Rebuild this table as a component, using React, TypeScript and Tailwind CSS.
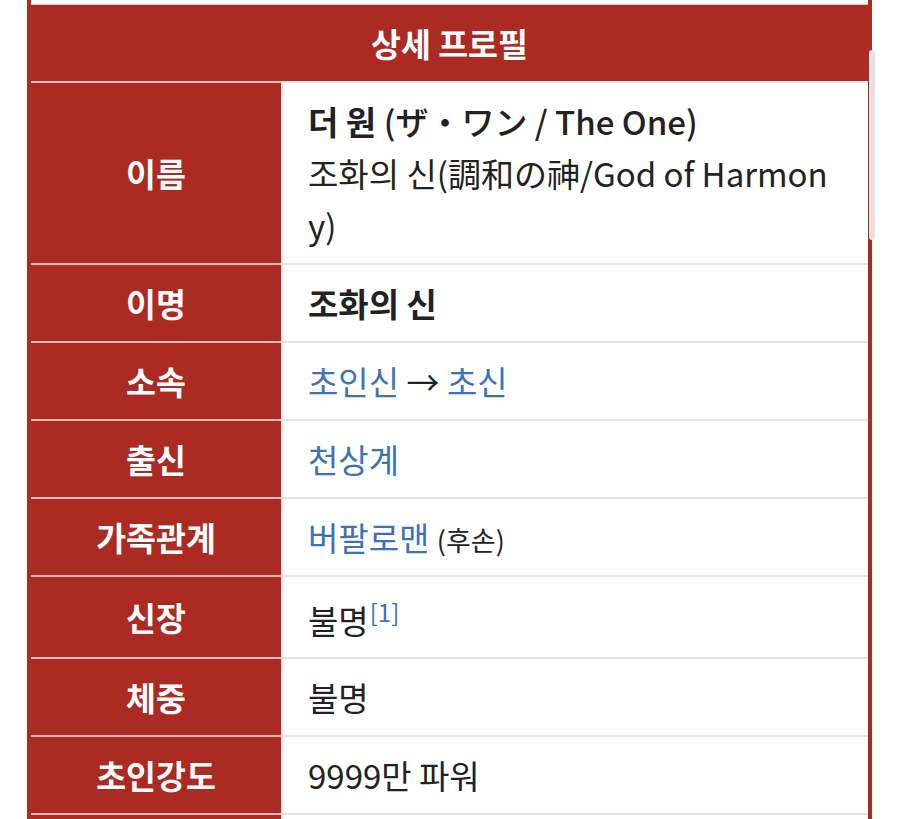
import React from 'react';

interface Row {
  label: string;
  value: React.ReactNode;
  tall?: boolean;
}

const Link = ({ children }: { children: React.ReactNode }) => (
  <span className="text-[#3b72b8]">{children}</span>
);

const ROWS: Row[] = [
  {
    label: '이름',
    value: (
      <>
        <span className="font-bold">더 원</span>
        <span className="font-medium"> (ザ・ワン / The One)</span>
        <br />
        조화의 신(調和の神/God of Harmony)
      </>
    ),
  },
  { label: '이명', value: <span className="font-bold">조화의 신</span> },
  {
    label: '소속',
    value: (
      <>
        <Link>초인신</Link> → <Link>초신</Link>
      </>
    ),
  },
  { label: '출신', value: <Link>천상계</Link> },
  {
    label: '가족관계',
    value: (
      <>
        <Link>버팔로맨</Link> <span className="text-[27px] leading-none">(후손)</span>
      </>
    ),
  },
  {
    label: '신장',
    value: (
      <>
        불명
        <sup className="text-[24px] text-[#3b72b8] -top-[12px] ml-[1px]">[1]</sup>
      </>
    ),
    tall: true,
  },
  { label: '체중', value: '불명' },
  { label: '초인강도', value: '9999만 파워' },
  { label: '', value: '' },
];

export default function App() {
  return (
    <div
      className="relative h-[819px] overflow-hidden bg-white"
      style={{ fontFamily: '"Noto Sans CJK KR", "Noto Sans", sans-serif' }}
    >
      <div className="ml-[27px] mr-[28px] border-x-4 border-[#ab2a22] bg-[#ab2a22]">
        <div className="h-[4px] bg-white" />
        <div className="h-[1px] bg-[#f0c4c0]" />
        <div className="h-[76px] flex items-center justify-center text-white font-bold text-[32.5px]">
          상세 프로필
        </div>
        {ROWS.map((row, i) => (
          <div key={i} className="flex">
            <div className="w-[250px] shrink-0 border-t-2 border-[#eebcb8] flex items-center justify-center text-white font-bold text-[32.5px] leading-[52px]">
              {row.label}
            </div>
            <div
              className={`flex-1 bg-white border-t-2 border-l-2 border-[#e3e3e3] px-[25px] ${
                row.tall ? 'pt-[17px] pb-[11px]' : 'py-[12px]'
              } text-[33px] leading-[52px] text-[#222] break-all min-h-[78px]`}
            >
              {row.value}
            </div>
          </div>
        ))}
      </div>
      <div className="absolute left-[869px] top-[50px] w-[6px] h-[190px] rounded-full bg-[#e2e2e2]" />
    </div>
  );
}
